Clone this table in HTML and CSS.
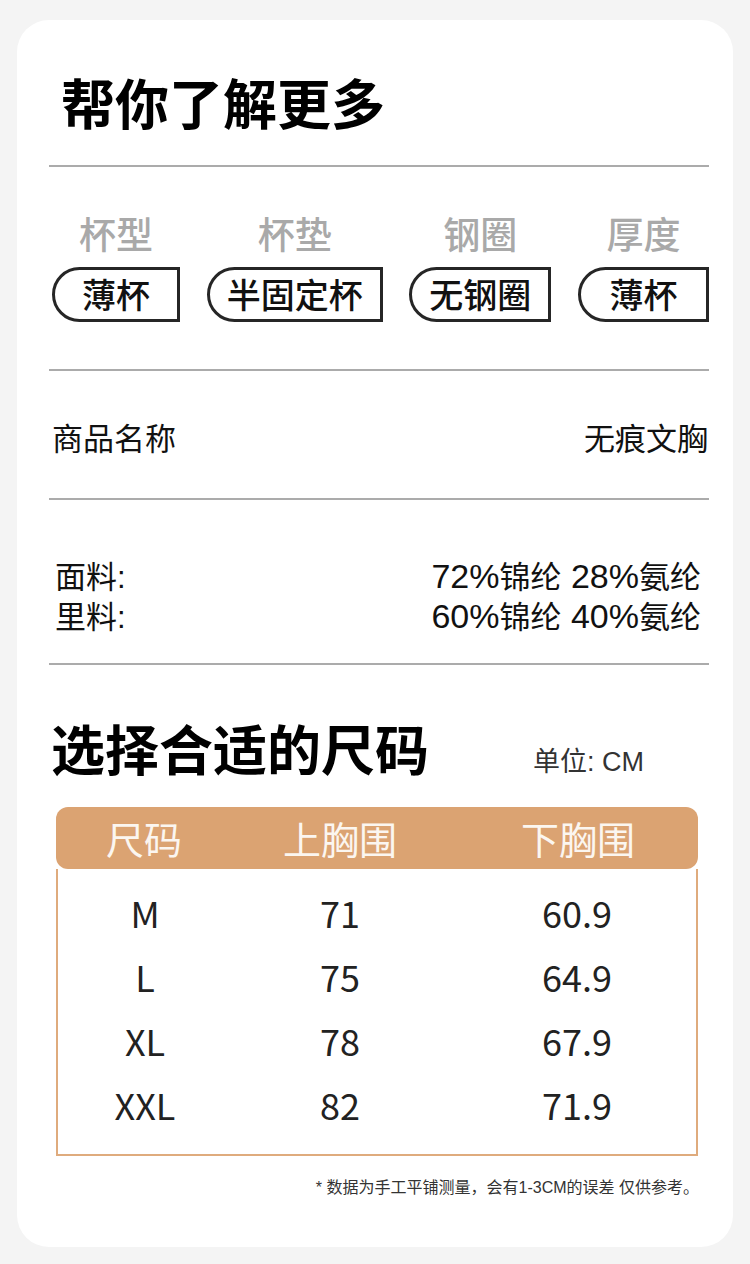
FILE: index.html
```html
<!DOCTYPE html>
<html lang="zh-CN">
<head>
<meta charset="utf-8">
<title>帮你了解更多</title>
<link rel="stylesheet" href="styles.css">
</head>
<body>
<main class="card">
  <h1 class="title">帮你了解更多</h1>
  <hr class="divider divider--first">

  <section class="tags">
    <div class="tag">
      <div class="tag__label">杯型</div>
      <div class="pill">薄杯</div>
    </div>
    <div class="tag">
      <div class="tag__label">杯垫</div>
      <div class="pill">半固定杯</div>
    </div>
    <div class="tag">
      <div class="tag__label">钢圈</div>
      <div class="pill">无钢圈</div>
    </div>
    <div class="tag">
      <div class="tag__label">厚度</div>
      <div class="pill pill--last">薄杯</div>
    </div>
  </section>

  <hr class="divider divider--tags">

  <div class="info-row">
    <span>商品名称</span>
    <span>无痕文胸</span>
  </div>

  <hr class="divider divider--info">

  <div class="fabric">
    <div class="fabric__row"><span>面料:</span><span><span class="latin">72%</span>锦纶<span class="latin"> 28%</span>氨纶</span></div>
    <div class="fabric__row"><span>里料:</span><span><span class="latin">60%</span>锦纶<span class="latin"> 40%</span>氨纶</span></div>
  </div>

  <hr class="divider divider--fabric">

  <div class="size-head">
    <h2 class="size-head__title">选择合适的尺码</h2>
    <span class="size-head__unit">单位: CM</span>
  </div>

  <div class="table">
    <div class="table__header">
      <span class="cell">尺码</span>
      <span class="cell">上胸围</span>
      <span class="cell cell--third">下胸围</span>
    </div>
    <div class="table__body">
      <div class="table__row"><span class="cell">M</span><span class="cell">71</span><span class="cell cell--third">60.9</span></div>
      <div class="table__row"><span class="cell">L</span><span class="cell">75</span><span class="cell cell--third">64.9</span></div>
      <div class="table__row"><span class="cell">XL</span><span class="cell">78</span><span class="cell cell--third">67.9</span></div>
      <div class="table__row"><span class="cell">XXL</span><span class="cell">82</span><span class="cell cell--third">71.9</span></div>
    </div>
  </div>

  <p class="note">* 数据为手工平铺测量，会有1-3CM的误差 仅供参考。</p>
</main>
</body>
</html>
```

FILE: styles.css
```css
* {
  box-sizing: border-box;
}

html, body {
  margin: 0;
  padding: 0;
}

body {
  background: #f4f4f4;
  font-family: "Noto Sans CJK SC", "Noto Sans", sans-serif;
  color: #111;
  width: 750px;
  height: 1264px;
  overflow: hidden;
  padding-top: 20px;
}

.card {
  margin: 0 17px;
  width: 716px;
  height: 1227px;
  background: #fff;
  border-radius: 32px;
  padding: 55px 24px 0 32px;
  display: flex;
  flex-direction: column;
}

.title {
  margin: 0;
  padding-left: 12px;
  font-size: 54px;
  line-height: 54px;
  font-weight: 700;
  color: #000;
}

.divider {
  border: 0;
  height: 2px;
  background: #ababab;
  margin: 0;
  width: 100%;
  flex: none;
}

.divider--first {
  margin-top: 36px;
}

.tags {
  margin-top: 46px;
  padding-left: 3px;
  display: flex;
  justify-content: space-between;
}

.tag {
  display: flex;
  flex-direction: column;
  align-items: center;
  gap: 14px;
}

.tag__label {
  font-size: 37px;
  line-height: 40px;
  font-weight: 500;
  color: #a9a9a9;
}

.pill {
  height: 55px;
  min-width: 128px;
  padding: 0 17px;
  border: 3px solid #262626;
  border-radius: 28px 0 0 28px;
  font-size: 34px;
  line-height: 48px;
  font-weight: 500;
  color: #111;
  text-align: center;
}

.pill--last {
  min-width: 131px;
}

.divider--tags {
  margin-top: 47px;
}

.info-row {
  margin-top: 46px;
  padding: 0 1px 0 3px;
  display: flex;
  justify-content: space-between;
  font-size: 31px;
  line-height: 40px;
  color: #111;
}

.divider--info {
  margin-top: 41px;
}

.fabric {
  margin-top: 58px;
  padding: 0 8px 0 6px;
  font-family: "Liberation Sans", "Noto Sans CJK SC", sans-serif;
  font-size: 31px;
  line-height: 40px;
  color: #111;
}

.fabric__row {
  display: flex;
  justify-content: space-between;
  align-items: baseline;
  height: 40px;
}

.latin {
  font-size: 34px;
  line-height: 34px;
}

.divider--fabric {
  margin-top: 25px;
}

.size-head {
  margin-top: 56px;
  padding-left: 2px;
  display: flex;
  align-items: baseline;
}

.size-head__title {
  margin: 0;
  font-size: 54px;
  line-height: 54px;
  font-weight: 700;
  color: #000;
}

.size-head__unit {
  margin-left: 104px;
  font-family: "Liberation Sans", "Noto Sans CJK SC", sans-serif;
  font-size: 27px;
  line-height: 30px;
  color: #333;
}

.table {
  margin: 30px 11px 0 7px;
}

.table__header {
  height: 62px;
  background: #dba372;
  border-radius: 12px;
  display: grid;
  grid-template-columns: 176px 216px 1fr;
  align-items: center;
  font-size: 38px;
  line-height: 62px;
  color: #fbf6f0;
}

.table__body {
  border: 2px solid #dfab7d;
  border-top: 0;
  padding: 11px 0 18px;
}

.table__row {
  display: grid;
  grid-template-columns: 174px 216px 1fr;
  height: 64px;
  align-items: center;
  font-size: 36px;
  line-height: 64px;
  color: #222;
}

.cell {
  text-align: center;
}

.cell--third {
  padding-left: 10px;
}

.note {
  margin: 22px 0 0;
  padding-right: 10px;
  text-align: right;
  font-family: "Liberation Sans", "Noto Sans CJK SC", sans-serif;
  font-size: 16px;
  line-height: 20px;
  color: #333;
}
```
